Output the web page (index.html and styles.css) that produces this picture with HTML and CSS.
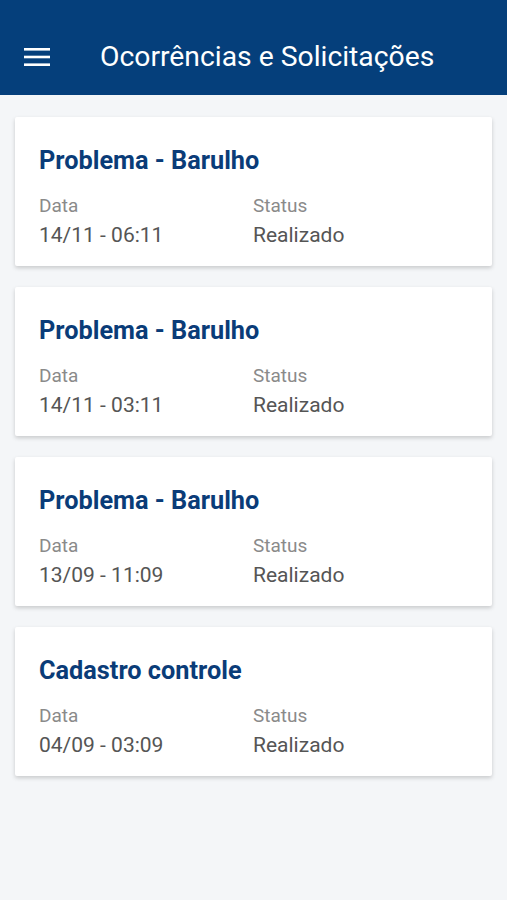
FILE: index.html
```html
<!DOCTYPE html>
<html lang="pt-BR">
<head>
    <meta charset="UTF-8">
    <meta name="viewport" content="width=device-width, initial-scale=1.0">
    <title>Ocorrências e Solicitações</title>
    <link rel="stylesheet" href="styles.css">
</head>
<body>
    <header class="toolbar">
        <button class="menu-btn" aria-label="Menu">
            <svg width="26" height="18" viewBox="0 0 26 18">
                <rect x="0" y="0" width="26" height="2.6" fill="#fff"/>
                <rect x="0" y="7.7" width="26" height="2.6" fill="#fff"/>
                <rect x="0" y="15.4" width="26" height="2.6" fill="#fff"/>
            </svg>
        </button>
        <h1 class="toolbar-title">Ocorrências e Solicitações</h1>
    </header>

    <main class="list">
        <div class="card">
            <h2 class="card-title">Problema - Barulho</h2>
            <div class="card-info">
                <div class="info-col">
                    <span class="info-label">Data</span>
                    <span class="info-value">14/11 - 06:11</span>
                </div>
                <div class="info-col">
                    <span class="info-label">Status</span>
                    <span class="info-value">Realizado</span>
                </div>
            </div>
        </div>
        <div class="card">
            <h2 class="card-title">Problema - Barulho</h2>
            <div class="card-info">
                <div class="info-col">
                    <span class="info-label">Data</span>
                    <span class="info-value">14/11 - 03:11</span>
                </div>
                <div class="info-col">
                    <span class="info-label">Status</span>
                    <span class="info-value">Realizado</span>
                </div>
            </div>
        </div>
        <div class="card">
            <h2 class="card-title">Problema - Barulho</h2>
            <div class="card-info">
                <div class="info-col">
                    <span class="info-label">Data</span>
                    <span class="info-value">13/09 - 11:09</span>
                </div>
                <div class="info-col">
                    <span class="info-label">Status</span>
                    <span class="info-value">Realizado</span>
                </div>
            </div>
        </div>
        <div class="card">
            <h2 class="card-title">Cadastro controle</h2>
            <div class="card-info">
                <div class="info-col">
                    <span class="info-label">Data</span>
                    <span class="info-value">04/09 - 03:09</span>
                </div>
                <div class="info-col">
                    <span class="info-label">Status</span>
                    <span class="info-value">Realizado</span>
                </div>
            </div>
        </div>
    </main>
</body>
</html>
```

FILE: styles.css
```css
body {
    font-family: Roboto, "Noto Sans", sans-serif;
    margin: 0;
    background-color: #f4f6f8;
    min-height: 900px;
}
.toolbar {
    display: flex;
    align-items: center;
    height: 95px;
    padding: 0 24px;
    padding-top: 18px;
    box-sizing: border-box;
    background-color: #053f7b;
}
.menu-btn {
    background: none;
    border: none;
    padding: 0;
    width: 26px;
    height: 18px;
    display: flex;
}
.toolbar-title {
    margin: 0 0 0 50px;
    color: #fff;
    font-size: 28.3px;
    font-weight: 400;
}
.list {
    display: flex;
    flex-direction: column;
    gap: 21px;
    padding: 22px 15px;
}
.card {
    background: #fff;
    border-radius: 2px;
    box-shadow: 0 2px 4px rgba(0, 0, 0, 0.18);
    height: 149px;
    box-sizing: border-box;
    padding: 29px 24px 0;
}
.card-title {
    margin: 0;
    color: #0a3c78;
    font-size: 25.3px;
    font-weight: 700;
    line-height: 30px;
}
.card-info {
    display: flex;
    margin-top: 16px;
}
.info-col {
    display: flex;
    flex-direction: column;
    width: 214px;
}
.info-label {
    color: #8a8a8a;
    font-size: 19px;
    line-height: 28px;
}
.info-value {
    color: #555;
    font-size: 21px;
    line-height: 30px;
}
```
